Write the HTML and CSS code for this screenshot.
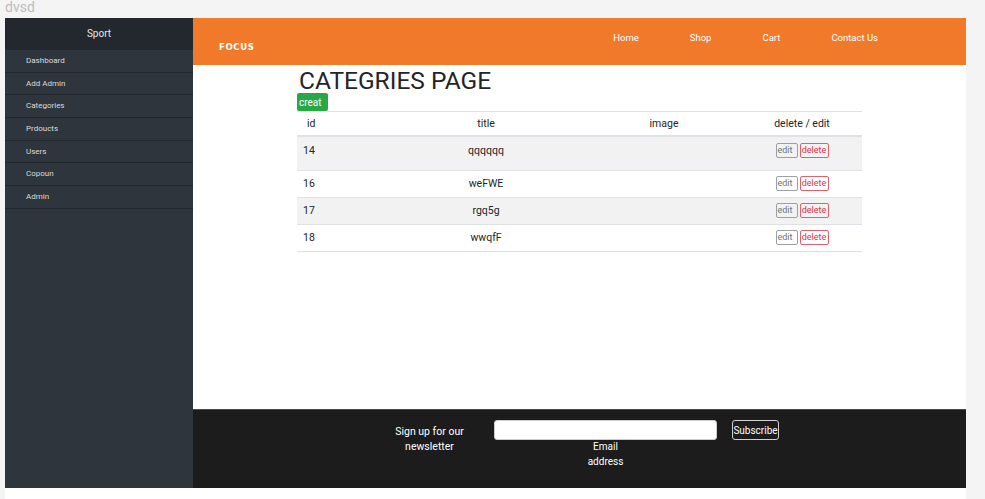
FILE: index.html
```html
<!DOCTYPE html>
<html>
<head>
<meta charset="utf-8">
<link rel="stylesheet" href="styles.css">
</head>
<body>
<div class="top-label">dvsd</div>
<div class="wrapper">
  <div class="page">
    <aside class="sidebar">
      <div class="side-head">Sport</div>
      <ul class="side-menu">
        <li>Dashboard</li>
        <li>Add Admin</li>
        <li>Categories</li>
        <li>Prdoucts</li>
        <li>Users</li>
        <li>Copoun</li>
        <li>Admin</li>
      </ul>
    </aside>
    <div class="main">
      <header class="topbar">
        <div class="brand">FOCUS</div>
        <nav class="nav">
          <a>Home</a>
          <a>Shop</a>
          <a>Cart</a>
          <a>Contact Us</a>
        </nav>
      </header>
      <section class="content">
        <div class="inner">
          <h1 class="title">CATEGRIES PAGE</h1>
          <button class="btn-create">creat</button>
          <table class="table">
            <colgroup>
              <col class="c1"><col class="c2"><col class="c3"><col class="c4">
            </colgroup>
            <thead>
              <tr><th class="th-id">id</th><th>title</th><th>image</th><th>delete / edit</th></tr>
            </thead>
            <tbody>
              <tr class="first"><td class="td-id">14</td><td class="ctr">qqqqqq</td><td></td><td class="ctr"><span class="btn-edit">edit</span><span class="btn-del">delete</span></td></tr>
              <tr><td class="td-id">16</td><td class="ctr">weFWE</td><td></td><td class="ctr"><span class="btn-edit">edit</span><span class="btn-del">delete</span></td></tr>
              <tr><td class="td-id">17</td><td class="ctr">rgq5g</td><td></td><td class="ctr"><span class="btn-edit">edit</span><span class="btn-del">delete</span></td></tr>
              <tr><td class="td-id">18</td><td class="ctr">wwqfF</td><td></td><td class="ctr"><span class="btn-edit">edit</span><span class="btn-del">delete</span></td></tr>
            </tbody>
          </table>
        </div>
      </section>
      <footer class="footer">
        <div class="signup">Sign up for our newsletter</div>
        <div class="email-group">
          <input class="email" type="text">
          <label class="email-label">Email address</label>
        </div>
        <button class="btn-sub">Subscribe</button>
      </footer>
    </div>
  </div>
</div>
</body>
</html>
```
FILE: styles.css
```css
* { box-sizing: border-box; }
html, body { margin: 0; padding: 0; }
body {
  background: #f4f4f4;
  font-family: Roboto, "Liberation Sans", sans-serif;
  height: 499px;
  overflow: hidden;
}
.top-label {
  height: 18px;
  padding-left: 5px;
  color: #bdbdbd;
  font-size: 14px;
  line-height: 15px;
}
.wrapper {
  margin-left: 5px;
  width: 961px;
  height: 481px;
  background: #fff;
}
.page {
  display: flex;
  height: 470px;
}
.sidebar {
  width: 188px;
  flex: none;
  background: #2e353d;
}
.side-head {
  height: 32px;
  background: #23282e;
  color: #e6e6e6;
  font-size: 10px;
  line-height: 32px;
  text-align: center;
}
.side-menu {
  list-style: none;
  margin: 0;
  padding: 0;
}
.side-menu li {
  height: 22.7px;
  line-height: 21.7px;
  border-bottom: 1px solid #23282e;
  padding-left: 21px;
  color: #dcdcdc;
  font-size: 8px;
}
.main {
  flex: 1;
  display: flex;
  flex-direction: column;
}
.topbar {
  height: 47px;
  background: #f07a2a;
  display: flex;
  align-items: flex-start;
}
.brand {
  padding-left: 26px;
  padding-top: 23px;
  color: #fff;
  font-family: "DejaVu Sans Condensed", "DejaVu Sans", sans-serif;
  font-weight: bold;
  font-size: 9.5px;
  line-height: 12px;
  letter-spacing: 0.6px;
}
.nav {
  margin-left: auto;
  padding-right: 88px;
  padding-top: 14px;
  display: flex;
  gap: 51px;
}
.nav a {
  color: #fff;
  font-size: 9.5px;
  line-height: 12px;
}
.content {
  flex: 1;
  background: #fff;
}
.inner {
  width: 565px;
  margin: 0 auto;
}
.title {
  margin: 0;
  padding-top: 4px;
  font-size: 24.5px;
  line-height: 24px;
  font-weight: 400;
  color: #212529;
  padding-left: 2px;
}
.btn-create {
  display: block;
  height: 18px;
  width: 31px;
  margin: 0;
  padding: 0 0 0 2px;
  border: none;
  border-radius: 2px;
  background: #28a745;
  color: #fff;
  font-family: Roboto, sans-serif;
  font-size: 10px;
  text-align: left;
}
.table {
  width: 565px;
  border-collapse: collapse;
  table-layout: fixed;
  font-size: 10.5px;
  color: #212529;
}
.c1 { width: 89px; }
.c2 { width: 200px; }
.c3 { width: 156px; }
.c4 { width: 120px; }
.table th {
  font-weight: 400;
  height: 24px;
  padding: 0;
  border-top: 1px solid #dee2e6;
  border-bottom: 2px solid #dee2e6;
  text-align: center;
  vertical-align: middle;
  line-height: 14px;
  padding-top: 1px;
}
.table th.th-id {
  text-align: left;
  padding-left: 10px;
}
.table td {
  border-top: 1px solid #dee2e6;
  padding: 5px 0 6px;
  line-height: 15px;
  vertical-align: top;
}
.table tbody tr:last-child td { border-bottom: 1px solid #dee2e6; }
.table tbody tr:nth-child(odd) td { background: #f2f2f2; }
.table tr.first td { padding-top: 6px; padding-bottom: 12px; }
.td-id { padding-left: 6px !important; }
.ctr { text-align: center; }
.btn-edit, .btn-del {
  display: inline-block;
  height: 15px;
  line-height: 13px;
  border-radius: 2px;
  font-size: 9px;
  vertical-align: top;
}
.btn-edit {
  width: 22px;
  border: 1px solid #9aa0a6;
  color: #6c757d;
  text-align: left;
  padding-left: 1px;
}
.btn-del {
  width: 29px;
  margin-left: 2px;
  border: 1px solid #e4606d;
  color: #dc3545;
  text-align: center;
}
.footer {
  height: 79px;
  background: #1c1c1c;
  border-top: 1px solid #4a4a4a;
  display: flex;
  align-items: flex-start;
  padding-left: 199px;
  padding-top: 10px;
}
.signup {
  width: 75px;
  margin-top: 4px;
  color: #fff;
  font-size: 10.5px;
  line-height: 15px;
  text-align: center;
}
.email-group {
  margin-left: 27px;
  width: 223px;
  display: flex;
  flex-direction: column;
  align-items: center;
}
.email {
  width: 223px;
  height: 20px;
  border: 1px solid #ccc;
  border-radius: 3px;
  background: #fff;
  margin: 0;
}
.email-label {
  width: 40px;
  color: #fff;
  font-size: 10px;
  line-height: 15px;
  text-align: center;
  margin-top: -1px;
}
.btn-sub {
  margin-left: 15px;
  width: 47px;
  height: 20px;
  padding: 0;
  background: transparent;
  border: 1px solid #d0d0d0;
  border-radius: 3px;
  color: #fff;
  font-family: Roboto, sans-serif;
  font-size: 10px;
}
```
